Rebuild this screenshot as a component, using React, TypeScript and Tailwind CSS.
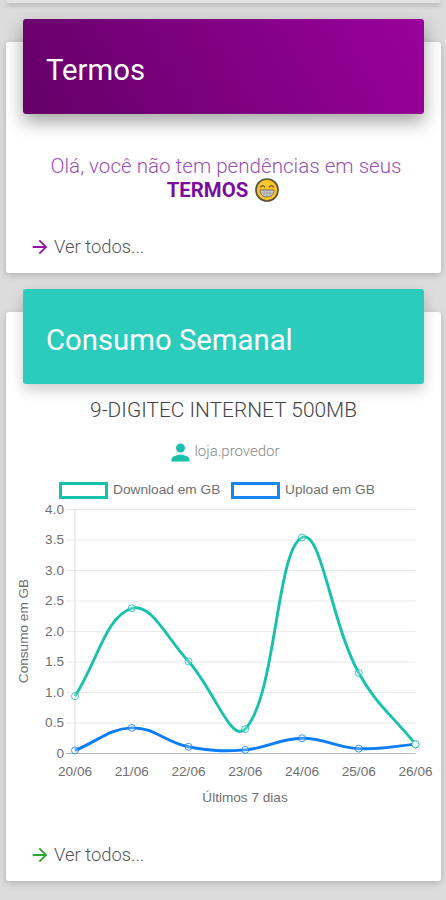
import type { ReactNode } from "react";
import { MdArrowForward, MdPerson } from "react-icons/md";

type Point = { x: number; y: number };

type Series = {
  label: string;
  color: string;
  values: number[];
};

const DAYS = ["20/06", "21/06", "22/06", "23/06", "24/06", "25/06", "26/06"];
const TICKS = ["0", "0.5", "1.0", "1.5", "2.0", "2.5", "3.0", "3.5", "4.0"];

const SERIES: Series[] = [
  { label: "Download em GB", color: "#17c1ab", values: [0.94, 2.38, 1.51, 0.4, 3.54, 1.32, 0.15] },
  { label: "Upload em GB", color: "#0b7dfa", values: [0.05, 0.42, 0.11, 0.06, 0.25, 0.08, 0.15] },
];

const LEFT = 69;
const RIGHT = 409.5;
const TOP = 9.5;
const BOTTOM = 253.5;
const TENSION = 0.4;

function toPoint(value: number, index: number): Point {
  return {
    x: LEFT + (index * (RIGHT - LEFT)) / (DAYS.length - 1),
    y: BOTTOM - (value * (BOTTOM - TOP)) / 4,
  };
}

// bezier with control points weighted by the distance to each neighbour
function smoothPath(points: Point[]) {
  const controls = points.map((point, i) => {
    const prev = points[i - 1] ?? point;
    const next = points[i + 1] ?? point;
    const before = Math.hypot(point.x - prev.x, point.y - prev.y);
    const after = Math.hypot(next.x - point.x, next.y - point.y);
    const fa = (TENSION * before) / (before + after);
    const fb = (TENSION * after) / (before + after);
    const dx = next.x - prev.x;
    const dy = next.y - prev.y;
    return {
      in: { x: point.x - fa * dx, y: Math.min(BOTTOM, point.y - fa * dy) },
      out: { x: point.x + fb * dx, y: Math.min(BOTTOM, point.y + fb * dy) },
    };
  });

  return points
    .map((point, i) => {
      if (i === 0) return `M${point.x} ${point.y}`;
      const a = controls[i - 1].out;
      const b = controls[i].in;
      return `C${a.x} ${a.y} ${b.x} ${b.y} ${point.x} ${point.y}`;
    })
    .join(" ");
}

function UsageChart() {
  return (
    <svg
      viewBox="0 0 435 312"
      className="block h-[312px] w-[435px] fill-[#707070] font-['Liberation_Sans',Arial,sans-serif] text-[13.6px]"
    >
      {TICKS.map((tick, i) => {
        const y = BOTTOM - (i * (BOTTOM - TOP)) / 8;
        return (
          <g key={tick}>
            <line x1={60} x2={RIGHT} y1={y} y2={y} stroke={i === 0 ? "#b9b9b9" : "#e9e9e9"} strokeWidth={1.2} />
            <text x={58} y={y + 4} textAnchor="end">{tick}</text>
          </g>
        );
      })}
      <line x1={LEFT} x2={LEFT} y1={TOP} y2={BOTTOM + 1} stroke="#e2e2e2" strokeWidth={1.2} />
      {DAYS.map((day, i) => (
        <text key={day} x={toPoint(0, i).x} y={275.5} textAnchor="middle">{day}</text>
      ))}
      <text x={239} y={302} textAnchor="middle">Últimos 7 dias</text>
      <text transform="translate(22 131) rotate(-90)" textAnchor="middle">Consumo em GB</text>

      {[...SERIES].reverse().map((series) => {
        const points = series.values.map(toPoint);
        return (
          <g key={series.label} stroke={series.color} fill="none">
            <path d={smoothPath(points)} strokeWidth={2.9} />
            {points.map((point, i) => (
              <circle
                key={i}
                cx={point.x}
                cy={point.y}
                r={3.5}
                strokeWidth={1}
                strokeOpacity={0.8}
                fill={i === points.length - 1 ? "#fff" : "#ffffff40"}
              />
            ))}
          </g>
        );
      })}
    </svg>
  );
}

function GrinEmoji() {
  return (
    <svg viewBox="0 0 24 24" className="h-6 w-6">
      <circle cx="12" cy="12" r="11" fill="#fbc52d" stroke="#5b5236" strokeWidth="1.7" />
      <path d="M5.3 9.3q2.3-3.2 4.6 0M14.1 9.3q2.3-3.2 4.6 0" fill="none" stroke="#6b5215" strokeWidth="1.3" />
      <path d="M5 12h14c0 4.5-2.8 7-7 7s-7-2.5-7-7z" fill="#c9cacb" stroke="#777063" strokeWidth="1" />
      <path d="M5.5 15h13M9 12v6.5M12 12v7M15 12v6.5" stroke="#9c9c9c" strokeWidth=".7" />
    </svg>
  );
}

function Card({ title, headerClass, className, children }: {
  title: string;
  headerClass: string;
  className: string;
  children: ReactNode;
}) {
  return (
    <section className={`ml-1.5 flex w-[435px] flex-col rounded-[3px] bg-white shadow-[0_2px_7px_rgba(0,0,0,0.2)] ${className}`}>
      <header className={`-mt-[23px] ml-[17px] flex h-[95px] w-[401px] shrink-0 items-center rounded-[3px] pl-[23px] pt-1.5 ${headerClass}`}>
        <h2 className="text-[29.3px] leading-9 text-white">{title}</h2>
      </header>
      {children}
    </section>
  );
}

function SeeAll({ iconClass }: { iconClass: string }) {
  return (
    <a className="mt-auto mb-3.5 flex h-6 items-center pl-[23px]">
      <MdArrowForward className={`h-[22px] w-[22px] ${iconClass}`} />
      <span className="ml-[3px] text-[18.4px] font-light text-[#555]">Ver todos...</span>
    </a>
  );
}

export default function App() {
  return (
    <main className="h-[900px] w-[446px] overflow-hidden bg-[#dcdcdc] font-[Roboto,sans-serif]">
      <div className="ml-1.5 h-[3px] w-[435px] rounded-b-[3px] bg-[#e2e2e2] shadow-[0_2px_5px_rgba(0,0,0,0.25)]" />

      <Card
        title="Termos"
        className="mt-[39px] h-[231px]"
        headerClass="bg-linear-[60deg,#640068,#9a009b] shadow-[0_8px_18px_rgba(0,0,0,0.36)]"
      >
        <div className="mt-10 text-center text-[20.6px] leading-6 font-light text-[#9a50b8]">
          <p className="pl-[5px]">Olá, você não tem pendências em seus</p>
          <p className="flex items-center justify-center gap-[7px] pr-px">
            <strong className="text-[20.4px] font-bold text-[#7b0d9e]">TERMOS</strong>
            <GrinEmoji />
          </p>
        </div>
        <SeeAll iconClass="text-[#9213a3]" />
      </Card>

      <Card
        title="Consumo Semanal"
        className="mt-[39px] h-[569px]"
        headerClass="bg-[#2cccbc] shadow-[0_6px_14px_rgba(0,0,0,0.2)]"
      >
        <h3 className="mt-3 text-center text-[20.9px] leading-7 font-light text-[#444]">9-DIGITEC INTERNET 500MB</h3>
        <div className="mt-4 flex h-6 items-center justify-center">
          <MdPerson className="h-[27px] w-[27px] text-[#1bbfab]" />
          <span className="pb-0.5 text-[15px] font-light text-[#888]">loja.provedor</span>
        </div>
        <div className="mt-[17px] ml-[53px] flex h-[18px] items-center font-['Liberation_Sans',Arial,sans-serif] text-[13.7px] text-[#707070]">
          <span className="h-[17px] w-[49px] border-[3px] border-[#17c1ab]" />
          <span className="ml-[5px] w-[118px]">{SERIES[0].label}</span>
          <span className="h-[17px] w-[49px] border-[3px] border-[#1686f5]" />
          <span className="ml-[5px]">{SERIES[1].label}</span>
        </div>
        <div className="mt-px">
          <UsageChart />
        </div>
        <SeeAll iconClass="text-[#2ca62e]" />
      </Card>
    </main>
  );
}
